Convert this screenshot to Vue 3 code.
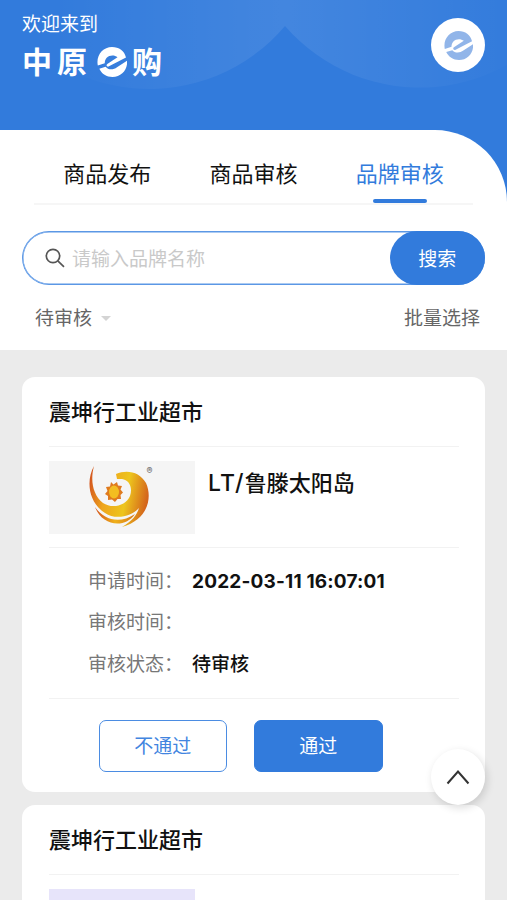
<script setup>
import { ref } from 'vue'

const tabs = ['商品发布', '商品审核', '品牌审核']
const active = ref(2)
const keyword = ref('')
const emblem =
  'M.8 18.500C-1.200 8.500 5.800 0 15 0C22 0 27.500 4 29 10.500L11.500 19.600C9.700 19.900 8.800 18 10.300 16.900L20.500 10.200C17.500 7.700 12.500 7.800 9.700 10.800C8.200 12.500 7.700 14.500 7.800 16.300ZM2.300 21.800L8.600 19.800C11 23 16.300 23.200 20 20.300L30 13.800C31 22.500 24.300 30 15.500 30C9.500 30 4.800 27 2.300 21.800Z'
</script>

<template>
  <div class="page">
    <header class="hero">
      <svg class="waves" viewBox="0 0 507 204" aria-hidden="true">
        <defs>
          <linearGradient id="waveLeft" x1="0" x2="1">
            <stop offset=".2" stop-color="#fff" stop-opacity="0" />
            <stop offset="1" stop-color="#fff" stop-opacity=".085" />
          </linearGradient>
          <linearGradient id="waveRight" x1="0" x2="1">
            <stop offset="0" stop-color="#fff" stop-opacity=".085" />
            <stop offset=".75" stop-color="#fff" stop-opacity="0.01" />
          </linearGradient>
        </defs>
        <path d="M-5 0A178 178 0 0 0 285 26V0Z" fill="url(#waveLeft)" />
        <path d="M285 0V26A178 178 0 0 0 573 0Z" fill="url(#waveRight)" />
      </svg>
      <div class="brand">
        <div class="welcome">欢迎来到</div>
        <div class="logo">
          <span class="spaced">中原</span>
          <svg viewBox="0 0 30 30"><path :d="emblem" /></svg>
          <span>购</span>
        </div>
      </div>
      <div class="avatar">
        <svg viewBox="0 0 30 30"><path :d="emblem" /></svg>
      </div>
    </header>

    <section class="panel">
      <nav class="tabs">
        <div
          v-for="(tab, i) in tabs"
          :key="tab"
          class="tab"
          :class="{ active: active === i }"
          @click="active = i"
        >{{ tab }}</div>
      </nav>
      <div class="search">
        <svg class="magnifier" viewBox="0 0 20 20">
          <circle cx="8" cy="8" r="6.700" /><path d="M12.800 12.800L19 18.800" />
        </svg>
        <input v-model="keyword" placeholder="请输入品牌名称" />
        <button class="search-button">搜索</button>
      </div>
      <div class="filters">
        <div class="status">待审核<i class="caret"></i></div>
        <div>批量选择</div>
      </div>
    </section>

    <main class="list">
      <article class="card">
        <h2>震坤行工业超市</h2>
        <div class="goods">
          <div class="thumb">
            <svg viewBox="0 0 146 73">
              <defs>
                <linearGradient id="flame" x1="0" x2="1" y1=".2" y2=".4">
                  <stop offset="0" stop-color="#d3541e" />
                  <stop offset=".3" stop-color="#eea51c" />
                  <stop offset=".65" stop-color="#edc51d" />
                  <stop offset="1" stop-color="#d4651b" />
                </linearGradient>
                <linearGradient id="tail" x1="0" x2="1">
                  <stop offset="0" stop-color="#d4511b" />
                  <stop offset=".5" stop-color="#efb11b" />
                  <stop offset="1" stop-color="#d77819" />
                </linearGradient>
              </defs>
              <path fill="url(#flame)" d="M45 5C41 20 44 34 54 42C63 48 77 45 81 35C84 26 80 19 73 18L68 18L67 13C78 8 91 11 97 22C104 38 98 59 73 66C83 60 88 54 90 47C82 56 66 59 56 52C39 41 37 19 45 5Z" />
              <path fill="url(#tail)" d="M46 46C54 58 70 64 86 53C76 68 53 65 46 46Z" />
              <path fill="#df7a1e" d="M62 21L64.500 23.500L68 21L69 24.500L73 25L71.500 28.500L74 31.500L71.500 34L72 38L68.500 38L66 41L63 38.500L59 39L59 35L56 33L58.500 30L57 26L61 25.500Z" />
              <ellipse cx="65" cy="31" rx="5" ry="6.500" fill="#f3bd20" />
              <text x="97.500" y="13" class="registered">®</text>
            </svg>
          </div>
          <div class="brand-name"><span class="latin">LT/</span>鲁滕太阳岛</div>
        </div>
        <dl class="details">
          <div><dt>申请时间：</dt><dd class="date">2022-03-11 16:07:01</dd></div>
          <div><dt>审核时间：</dt><dd></dd></div>
          <div><dt>审核状态：</dt><dd>待审核</dd></div>
        </dl>
        <div class="actions">
          <button class="reject">不通过</button>
          <button class="approve">通过</button>
        </div>
      </article>
      <article class="card">
        <h2>震坤行工业超市</h2>
        <div class="goods"><div class="thumb lilac"></div></div>
      </article>
    </main>

    <button class="to-top" aria-label="返回顶部">
      <svg viewBox="0 0 24 16"><path d="M1.500 14.500L12 2.500L22.500 14.500" /></svg>
    </button>
  </div>
</template>

<style>
body { margin: 0; }
</style>

<style scoped>
* { box-sizing: border-box; }
.page {
  position: relative;
  height: 900px;
  overflow: hidden;
  background: #ebebeb;
  font-family: Inter, "Noto Sans CJK SC", sans-serif;
  color: #111;
}
button { font: inherit; padding: 0; border: 0; }
.hero {
  position: relative;
  display: flex;
  justify-content: space-between;
  height: 204px;
  padding: 0 22px;
  background: #327bdc;
  color: #fff;
}
.waves { position: absolute; top: 0; left: 0; width: 507px; height: 204px; }
.brand { position: relative; padding-top: 11px; }
.welcome { font-size: 19px; line-height: 28px; }
.logo {
  display: flex;
  align-items: center;
  height: 36px;
  margin-top: 5px;
  font-size: 30px;
  font-weight: 700;
  line-height: 36px;
}
.spaced { letter-spacing: 5px; }
.logo svg { width: 30px; height: 30px; margin: 0 5px; fill: #fff; }
.avatar {
  position: relative;
  display: flex;
  align-items: center;
  justify-content: center;
  width: 54px;
  height: 54px;
  margin-top: 18px;
  border-radius: 50%;
  background: #fff;
}
.avatar svg { width: 29px; height: 29px; fill: #91b5e9; }
.panel {
  position: relative;
  height: 220px;
  margin-top: -74px;
  padding: 0 22px;
  border-radius: 0 72px 0 0;
  background: #fff;
}
.tabs {
  display: flex;
  height: 75px;
  margin: 0 12px;
  border-bottom: 2px solid #f6f6f6;
}
.tab {
  display: flex;
  flex: 1;
  flex-direction: column;
  align-items: center;
  padding-top: 27px;
  font-size: 22px;
  line-height: 34px;
}
.tab.active { color: #327bdc; }
.tab.active::after {
  content: "";
  width: 54px;
  height: 4px;
  margin-top: 8px;
  border-radius: 2px;
  background: #327bdc;
}
.search {
  display: flex;
  align-items: center;
  height: 54px;
  margin-top: 26px;
  border: 1.5px solid #5b97e5;
  border-right: 0;
  border-radius: 27px;
  box-shadow: inset 0 0 0 .5px #5b97e5;
}
.magnifier {
  width: 20px;
  height: 20px;
  margin: 0 7px 0 22px;
  fill: none;
  stroke: #555;
  stroke-width: 1.7;
}
.search input {
  flex: 1;
  min-width: 0;
  padding: 3px 0 0;
  border: 0;
  outline: 0;
  background: none;
  font: 19px/28px Inter, "Noto Sans CJK SC", sans-serif;
}
.search input::placeholder { color: #c9c9c9; }
.search-button {
  width: 95.500px;
  height: 54px;
  padding-bottom: 2px;
  border-radius: 27px;
  background: #327bdc;
  color: #fff;
  font-size: 19px;
}
.filters {
  display: flex;
  justify-content: space-between;
  padding: 19px 5px 0 13px;
  color: #666;
  font-size: 19px;
  line-height: 30px;
}
.status { display: flex; align-items: center; }
.caret {
  margin: -2px 0 0 9px;
  border: 5px solid transparent;
  border-top-color: #d4d4d4;
  border-bottom: 0;
}
.list {
  display: flex;
  flex-direction: column;
  gap: 13px;
  padding: 27px 22px 0;
}
.card {
  height: 415px;
  padding: 0 26px 0 27px;
  border-radius: 13px;
  background: #fff;
}
h2 {
  height: 70px;
  margin: 0;
  padding-top: 18px;
  border-bottom: 1px solid #f2f2f2;
  font-size: 22px;
  font-weight: 500;
  line-height: 34px;
}
.goods {
  display: flex;
  gap: 13px;
  height: 101px;
  padding-top: 14px;
  border-bottom: 1px solid #f2f2f2;
}
.thumb { width: 146px; height: 73px; background: #f5f5f5; }
.thumb svg { display: block; width: 146px; height: 73px; }
.lilac { background: #e7e4fa; }
.registered { font-size: 9px; font-weight: 700; fill: #777; }
.brand-name { padding-top: 5px; font-size: 22px; font-weight: 500; line-height: 34px; }
.latin { font-size: 23px; letter-spacing: 1.200px; }
.details {
  height: 151px;
  margin: 0;
  padding: 12.500px 0 0 39px;
  border-bottom: 1px solid #f2f2f2;
  font-size: 19px;
  line-height: 41.500px;
}
.details div { display: flex; height: 41.500px; }
dt { width: 104px; color: #777; white-space: nowrap; }
dd { margin: 0; font-weight: 500; white-space: nowrap; }
.date { font-weight: 700; letter-spacing: .180px; }
.actions { display: flex; gap: 27px; padding: 21px 0 0 49.500px; }
.actions button {
  width: 128.500px;
  height: 51.500px;
  padding-bottom: 3px;
  border: 1.5px solid #4b8ce2;
  border-radius: 7px;
  font-size: 19px;
}
.actions .reject { background: #fff; color: #4285df; }
.actions .approve { border-color: #327bdc; background: #327bdc; color: #fff; }
.to-top {
  position: absolute;
  right: 22px;
  bottom: 95px;
  display: flex;
  align-items: center;
  justify-content: center;
  width: 54px;
  height: 56px;
  border-radius: 50%;
  background: #fff;
  box-shadow: 2px 3px 8px rgba(0, 0, 0, .14);
}
.to-top svg { width: 24px; height: 16px; fill: none; stroke: #333; stroke-width: 2; }
</style>
